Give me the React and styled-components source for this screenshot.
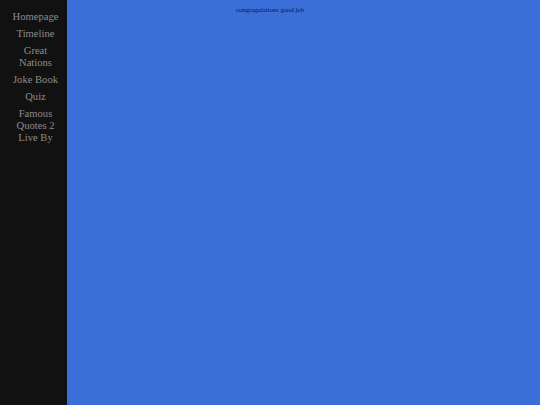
import React from 'react';
import styled, { createGlobalStyle } from 'styled-components';

const Global = createGlobalStyle`
  html, body {
    margin: 0;
    padding: 0;
    height: 100%;
  }
  #root {
    height: 100%;
  }
`;

const Page = styled.div`
  display: flex;
  width: 100%;
  height: 405px;
  background-color: #3a6fd9;
  font-family: "Liberation Serif", "Times New Roman", serif;
  position: relative;
`;

const SideNav = styled.nav`
  width: 63px;
  flex-shrink: 0;
  background-color: #111111;
  padding: 11px 0 0 4px;
  display: flex;
  flex-direction: column;
  gap: 5px;
`;

const NavLink = styled.a`
  display: block;
  text-align: center;
  color: #8c8c8c;
  font-size: 10.6px;
  line-height: 12px;
  text-decoration: none;
  cursor: pointer;
`;

const Main = styled.main`
  flex: 1;
`;

const Banner = styled.p`
  position: absolute;
  top: 5px;
  left: 0;
  right: 0;
  margin: 0;
  text-align: center;
  font-size: 6.7px;
  line-height: 9px;
  color: #0a1540;
`;

const links = ['Homepage', 'Timeline', 'Great Nations', 'Joke Book', 'Quiz', 'Famous Quotes 2 Live By'];

const wrap = {
  'Great Nations': ['Great', 'Nations'],
  'Famous Quotes 2 Live By': ['Famous', 'Quotes 2', 'Live By'],
};

const App = () => {
  return (
    <>
      <Global />
      <Page>
        <SideNav>
          {links.map((l) => (
            <NavLink key={l}>
              {(wrap[l] || [l]).map((part, i) => (
                <React.Fragment key={i}>
                  {i > 0 && <br />}
                  {part}
                </React.Fragment>
              ))}
            </NavLink>
          ))}
        </SideNav>
        <Main />
        <Banner>congragulations good job</Banner>
      </Page>
    </>
  );
};

export default App;
